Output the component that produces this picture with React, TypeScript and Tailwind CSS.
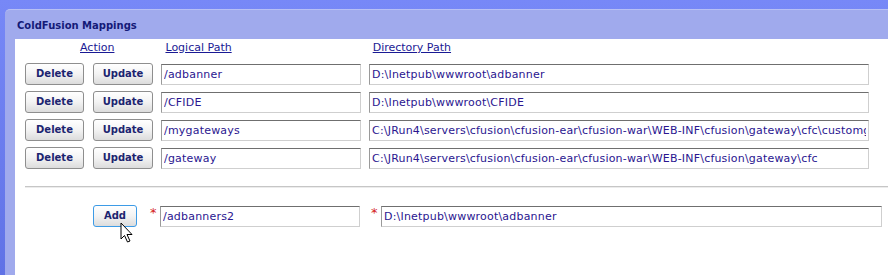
import React from "react";

const rows = [
  { logical: "/adbanner", dir: "D:\\Inetpub\\wwwroot\\adbanner" },
  { logical: "/CFIDE", dir: "D:\\Inetpub\\wwwroot\\CFIDE" },
  {
    logical: "/mygateways",
    dir: "C:\\JRun4\\servers\\cfusion\\cfusion-ear\\cfusion-war\\WEB-INF\\cfusion\\gateway\\cfc\\customgateways",
  },
  {
    logical: "/gateway",
    dir: "C:\\JRun4\\servers\\cfusion\\cfusion-ear\\cfusion-war\\WEB-INF\\cfusion\\gateway\\cfc",
  },
];

const font = { fontFamily: '"DejaVu Sans", Verdana, sans-serif' };

function Btn({ label, w, focus }: { label: string; w: string; focus?: boolean }) {
  return (
    <button
      className={`${w} h-[22px] rounded-[3px] border ${
        focus ? "border-[#3d9be6]" : "border-[#8e8e8e]"
      } bg-gradient-to-b from-white via-[#f3f3f3] to-[#dcdcdc] text-[10px] font-bold text-[#1c2470] leading-none flex items-center justify-center shrink-0`}
      style={font}
    >
      {label}
    </button>
  );
}

function Field({ value, w }: { value: string; w: string }) {
  return (
    <input
      readOnly
      value={value}
      className={`${w} h-[21px] shrink-0 border border-t-[#6f6f6f] border-l-[#9a9a9a] border-b-[#cfcfcf] border-r-[#cfcfcf] bg-white px-[2px] text-[11px] tracking-[0.2px] text-[#2a1690] outline-none`}
      style={font}
    />
  );
}

function Star() {
  return (
    <span
      className="text-[#d42020] text-[13px] leading-none self-start mt-[1px] w-[10px] shrink-0"
      style={font}
    >
      *
    </span>
  );
}

export default function App() {
  return (
    <div
      className="w-[888px] h-[275px] overflow-hidden bg-gradient-to-b from-[#7788f7] to-[#6072e6] pt-[9px] pl-[5px]"
      style={font}
    >
      <div className="h-full flex flex-col rounded-tl-[5px] bg-[#a0aaed] border-t border-[#b8c0f4]">
        <div className="h-[29px] flex items-center pt-[2px] pl-[12px] text-[10px] font-bold text-[#141a78]">
          ColdFusion Mappings
        </div>
        <div className="flex-1 ml-[10px] bg-white">
          <div className="flex h-[24px] items-start pt-[1px] text-[11px] text-[#1a1a94]">
            <span className="underline ml-[65px]">Action</span>
            <span className="underline ml-[51px]">Logical Path</span>
            <span className="underline ml-[141px]">Directory Path</span>
          </div>
          <div className="flex flex-col gap-[6px] pl-[10px]">
            {rows.map((r) => (
              <div key={r.logical} className="flex items-center h-[22px]">
                <Btn label="Delete" w="w-[59px]" />
                <div className="w-[9px]" />
                <Btn label="Update" w="w-[60px]" />
                <div className="w-[8px]" />
                <Field value={r.logical} w="w-[200px]" />
                <div className="w-[8px]" />
                <Field value={r.dir} w="w-[500px]" />
              </div>
            ))}
          </div>
          <div className="ml-[10px] mt-[17px] border-t border-[#c6c6c6] border-b border-b-[#ececec] h-[2px]" />
          <div className="relative flex items-center h-[22px] mt-[17px] pl-[78px]">
            <Btn label="Add" w="w-[44px]" focus />
            <div className="w-[13px]" />
            <Star />
            <Field value="/adbanners2" w="w-[200px]" />
            <div className="w-[11px]" />
            <Star />
            <Field value={"D:\\Inetpub\\wwwroot\\adbanner"} w="w-[501px]" />
            <svg
              className="absolute left-[105px] top-[17px]"
              width="14"
              height="22"
              viewBox="0 0 14 22"
            >
              <path
                d="M1 1 L1 17 L4.5 13.5 L7.5 20 L10 19 L7 12.5 L12 12.5 Z"
                fill="white"
                stroke="black"
                strokeWidth="1"
                strokeLinejoin="miter"
              />
            </svg>
          </div>
        </div>
      </div>
    </div>
  );
}
